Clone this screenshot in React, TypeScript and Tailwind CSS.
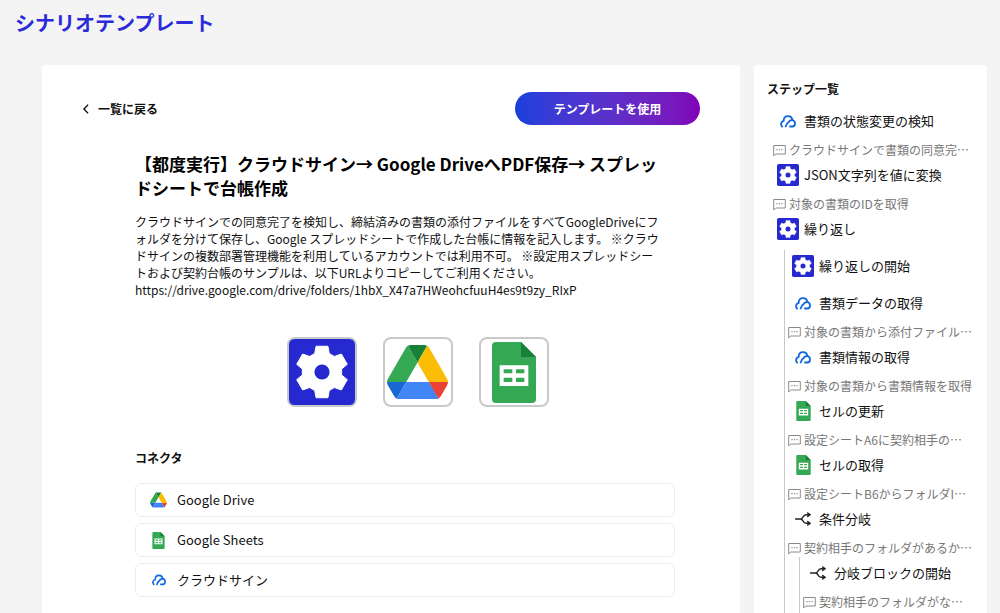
import React from 'react';

type IconName = 'gear' | 'drive' | 'sheets' | 'cloud' | 'branch';

type Step = {
  icon: IconName;
  label: string;
  comment?: string;
  children?: Step[];
};

const steps: Step[] = [
  { icon: 'cloud', label: '書類の状態変更の検知', comment: 'クラウドサインで書類の同意完…' },
  { icon: 'gear', label: 'JSON文字列を値に変換', comment: '対象の書類のIDを取得' },
  {
    icon: 'gear',
    label: '繰り返し',
    children: [
      { icon: 'gear', label: '繰り返しの開始' },
      { icon: 'cloud', label: '書類データの取得', comment: '対象の書類から添付ファイル…' },
      { icon: 'cloud', label: '書類情報の取得', comment: '対象の書類から書類情報を取得' },
      { icon: 'sheets', label: 'セルの更新', comment: '設定シートA6に契約相手の…' },
      { icon: 'sheets', label: 'セルの取得', comment: '設定シートB6からフォルダI…' },
      {
        icon: 'branch',
        label: '条件分岐',
        comment: '契約相手のフォルダがあるか…',
        children: [
          { icon: 'branch', label: '分岐ブロックの開始', comment: '契約相手のフォルダがな…' },
        ],
      },
    ],
  },
];

const connectors: { icon: IconName; label: string }[] = [
  { icon: 'drive', label: 'Google Drive' },
  { icon: 'sheets', label: 'Google Sheets' },
  { icon: 'cloud', label: 'クラウドサイン' },
];

const GearIcon: React.FC<{ className?: string }> = ({ className }) => (
  <svg viewBox="-100 -100 200 200" className={className} aria-hidden="true">
    <rect x="-100" y="-100" width="200" height="200" rx="16" fill="#2529cf" />
    <path
      d="M-22-56L-18-78H18L22-56L37.5-47.1L58.6-54.5L76.6-23.4L59.5-8.9V8.9L76.6 23.4L58.6 54.5L37.5 47.1L22 56L18 78H-18L-22 56L-37.5 47.1L-58.6 54.5L-76.6 23.4L-59.5 8.9V-8.9L-76.6-23.4L-58.6-54.5L-37.5-47.1Z"
      fill="#fff"
      stroke="#fff"
      strokeWidth="3"
      strokeLinejoin="round"
    />
    <circle r="23" fill="#2529cf" />
  </svg>
);

const DriveIcon: React.FC<{ className?: string }> = ({ className }) => (
  <svg viewBox="0 0 87.3 78" className={className} aria-hidden="true">
    <path fill="#1967d2" d="m6.6 66.85 3.85 6.65c.8 1.4 1.95 2.5 3.3 3.3l13.75-23.8H0c0 1.55.4 3.1 1.2 4.5z" />
    <path fill="#34a853" d="M43.65 25 29.9 1.2c-1.35.8-2.5 1.9-3.3 3.3L1.2 48.5A9.06 9.06 0 0 0 0 53h27.5z" />
    <path fill="#ea4335" d="M73.55 76.8c1.35-.8 2.5-1.9 3.3-3.3l1.6-2.75L86.1 57.5c.8-1.4 1.2-2.95 1.2-4.5H59.8l5.85 11.5z" />
    <path fill="#188038" d="M43.65 25 57.4 1.2C56.05.4 54.5 0 52.9 0H34.4c-1.6 0-3.15.45-4.5 1.2z" />
    <path fill="#4285f4" d="M59.8 53H27.5L13.75 76.8c1.35.8 2.9 1.2 4.5 1.2h50.8c1.6 0 3.15-.45 4.5-1.2z" />
    <path fill="#fbbc04" d="M73.4 26.5 60.7 4.5c-.8-1.4-1.95-2.5-3.3-3.3L43.65 25 59.8 53h27.45c0-1.55-.4-3.1-1.2-4.5z" />
  </svg>
);

const SheetsIcon: React.FC<{ className?: string }> = ({ className }) => (
  <svg viewBox="0 0 132 183" className={className} aria-hidden="true">
    <path fill="#34a853" d="M12 0H87L132 45V171a12 12 0 0 1-12 12H12a12 12 0 0 1-12-12V12A12 12 0 0 1 12 0z" />
    <path fill="#188038" d="M87 0v45h45z" />
    <path
      fill="#fff"
      fillRule="evenodd"
      d="M23 70h86v62H23zM35 82v12h26V82zM72 82v12h25V82zM35 107v13h26v-13zM72 107v13h25v-13z"
    />
  </svg>
);

const CloudIcon: React.FC<{ className?: string }> = ({ className }) => (
  <svg
    viewBox="0 0 48 38"
    className={className}
    fill="none"
    stroke="#0f68e0"
    strokeWidth="5.5"
    strokeLinecap="round"
    aria-hidden="true"
  >
    <path d="M6 34C1 29 3 19 11 17C11 8 17 3 24 3C32 3 36 8 37 14C43 16 45 20 45 25C45 31 42 34 37 34H30" />
    <path d="M36 15C33 15 30 16 28 18" />
    <path d="M27 20C22 23 19 28 17 34" />
  </svg>
);

const BranchIcon: React.FC<{ className?: string }> = ({ className }) => (
  <svg
    viewBox="0 0 48 42"
    className={className}
    fill="none"
    stroke="#222"
    strokeWidth="4.5"
    strokeLinecap="round"
    strokeLinejoin="round"
    aria-hidden="true"
  >
    <path d="M2 21H17C25 21 23 8 33 8H44M17 21C25 21 23 34 33 34H44" />
    <path d="M38 3L45 8L38 13M38 29L45 34L38 39" />
  </svg>
);

const CommentIcon: React.FC = () => (
  <svg viewBox="0 0 13 13" className="h-[13px] w-[13px] shrink-0" fill="none" stroke="#8a8a8a" aria-hidden="true">
    <path d="M.7 12V1.5H12.3V10H2.7Z" strokeLinejoin="round" />
    <path d="M3.4 5.7h1.2M5.9 5.7h1.2M8.4 5.7h1.2" strokeWidth="1.3" />
  </svg>
);

const StepIcon: React.FC<{ name: IconName }> = ({ name }) => {
  if (name === 'gear') return <GearIcon className="h-[22px] w-[22px]" />;
  if (name === 'cloud') return <CloudIcon className="h-[13px] w-4" />;
  if (name === 'sheets') return <SheetsIcon className="h-5 w-[15px]" />;
  if (name === 'drive') return <DriveIcon className="h-4 w-[17px]" />;
  return <BranchIcon className="h-[14px] w-4" />;
};

const StepItem: React.FC<{ step: Step }> = ({ step }) => (
  <li>
    <div className="flex h-[37px] items-center gap-[5px] pb-[5px] pl-[7px] text-[13px]">
      <span className="flex w-[22px] shrink-0 justify-center">
        <StepIcon name={step.icon} />
      </span>
      <span className="whitespace-nowrap">{step.label}</span>
    </div>
    {step.comment && (
      <div className="flex h-[17px] items-center gap-[3px] pb-px pl-[3px] text-xs text-[#777]">
        <CommentIcon />
        <span className="whitespace-nowrap">{step.comment}</span>
      </div>
    )}
    {step.children && (
      <ul className="ml-[14px] border-l border-[#c8c8c8] pb-3">
        {step.children.map((child) => (
          <StepItem key={child.label} step={child} />
        ))}
      </ul>
    )}
  </li>
);

const ConnectorIcon: React.FC<{ name: IconName }> = ({ name }) => {
  if (name === 'drive') return <DriveIcon className="h-4 w-[17px]" />;
  if (name === 'sheets') return <SheetsIcon className="h-[17px] w-[13px]" />;
  return <CloudIcon className="h-3 w-[14px]" />;
};

export default function App() {
  return (
    <div
      lang="ja"
      className="min-h-screen bg-[#f4f4f4] pb-6 font-['Noto_Sans_CJK_JP',sans-serif] text-[#111]"
    >
      <h1 className="px-[15px] pt-2 text-xl leading-[30px] font-bold text-[#2b2bd9]">シナリオテンプレート</h1>

      <div className="mt-[27px] mr-[13px] ml-[42px] flex gap-[14px]">
        <main className="min-w-0 flex-1 rounded bg-white px-10 pt-[27px] pb-8">
          <div className="flex items-center justify-between">
            <a href="#list" className="flex items-center gap-2 text-xs font-bold">
              <svg viewBox="0 0 8 12" className="h-[10px] w-2" fill="none" stroke="#111" strokeWidth="1.6" aria-hidden="true">
                <path d="M6.5 1L1.5 6L6.5 11" />
              </svg>
              一覧に戻る
            </a>
            <button
              type="button"
              className="h-[33px] w-[185px] rounded-full bg-linear-to-r from-[#1540dc] to-[#8000b8] text-xs font-bold text-white"
            >
              テンプレートを使用
            </button>
          </div>

          <div className="mt-[27px] ml-[53px]">
            <h2 className="max-w-[525px] text-[17px] leading-6 font-bold text-black">
              【都度実行】クラウドサイン→ Google DriveへPDF保存→ スプレッドシートで台帳作成
            </h2>
            <p className="mt-[13px] max-w-[525px] text-xs leading-[17px]">
              クラウドサインでの同意完了を検知し、締結済みの書類の添付ファイルをすべてGoogleDriveにフォルダを分けて保存し、Google
              スプレッドシートで作成した台帳に情報を記入します。 ※クラウドサインの複数部署管理機能を利用しているアカウントでは利用不可。
              ※設定用スプレッドシートおよび契約台帳のサンプルは、以下URLよりコピーしてご利用ください。
              https://drive.google.com/drive/folders/1hbX_X47a7HWeohcfuuH4es9t9zy_RIxP
            </p>

            <div className="mt-[39px] flex justify-center gap-[26px]">
              <div className="flex h-[70px] w-[70px] items-center justify-center rounded-lg border-2 border-[#c9c9c9]">
                <GearIcon className="h-[66px] w-[66px]" />
              </div>
              <div className="flex h-[70px] w-[70px] items-center justify-center rounded-lg border-2 border-[#c9c9c9]">
                <DriveIcon className="w-[61px]" />
              </div>
              <div className="flex h-[70px] w-[70px] items-center justify-center rounded-lg border-2 border-[#c9c9c9]">
                <SheetsIcon className="h-[61px]" />
              </div>
            </div>

            <h3 className="mt-[42px] text-xs leading-[18px] font-bold">コネクタ</h3>
            <ul className="mt-4 flex max-w-[540px] flex-col gap-[6px]">
              {connectors.map((connector) => (
                <li
                  key={connector.label}
                  className="flex h-[34px] items-center gap-[9px] rounded-md border border-[#ececec] px-[13px] text-[13px]"
                >
                  <span className="flex w-[19px] justify-center">
                    <ConnectorIcon name={connector.icon} />
                  </span>
                  {connector.label}
                </li>
              ))}
            </ul>
          </div>
        </main>

        <aside className="w-[233px] shrink-0 rounded bg-white px-[13px] pt-[15px]">
          <h3 className="mb-2 text-xs leading-[17px] font-bold">ステップ一覧</h3>
          <ul className="ml-[3px]">
            {steps.map((step) => (
              <StepItem key={step.label} step={step} />
            ))}
          </ul>
        </aside>
      </div>
    </div>
  );
}
